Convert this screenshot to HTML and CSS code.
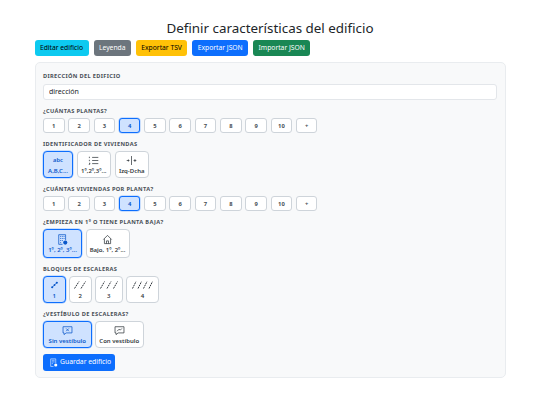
FILE: index.html
```html
<!DOCTYPE html>
<html lang="es">
<head>
<meta charset="utf-8">
<title>Definir características del edificio</title>
<link rel="stylesheet" href="styles.css">
</head>
<body>
<main class="page">
  <h1 class="title">Definir características del edificio</h1>
  <div class="toolbar">
    <button class="btn info">Editar edificio</button>
    <button class="btn grey">Leyenda</button>
    <button class="btn warn">Exportar TSV</button>
    <button class="btn blue">Exportar JSON</button>
    <button class="btn green">Importar JSON</button>
  </div>
  <section class="card">
    <div class="label first">DIRECCIÓN DEL EDIFICIO</div>
    <input class="field" type="text" value="dirección">

    <div class="label">¿CUÁNTAS PLANTAS?</div>
    <div class="row nums">
      <button class="num">1</button><button class="num">2</button><button class="num">3</button><button class="num on">4</button><button class="num">5</button><button class="num">6</button><button class="num">7</button><button class="num">8</button><button class="num">9</button><button class="num">10</button><button class="num">+</button>
    </div>

    <div class="label">IDENTIFICADOR DE VIVIENDAS</div>
    <div class="row">
      <button class="opt on w-a"><span class="abc">abc</span><span>A,B,C...</span></button>
      <button class="opt w-b">
        <svg class="ico" viewBox="0 0 16 16"><path d="M6 3.5h9M6 8h9M6 12.5h9M2 2.5v2M2 7v2M1.5 12h1.5l-1.5 1.5H3" /></svg>
        <span>1º,2º,3º...</span></button>
      <button class="opt w-b">
        <svg class="ico" viewBox="0 0 16 16"><path d="M8 1.5v13M1 8h4M3.5 6.5v3M11 8h4M13 6v4" /></svg>
        <span>Izq-Dcha</span></button>
    </div>

    <div class="label">¿CUÁNTAS VIVIENDAS POR PLANTA?</div>
    <div class="row nums">
      <button class="num">1</button><button class="num">2</button><button class="num">3</button><button class="num on">4</button><button class="num">5</button><button class="num">6</button><button class="num">7</button><button class="num">8</button><button class="num">9</button><button class="num">10</button><button class="num">+</button>
    </div>

    <div class="label">¿EMPIEZA EN 1º O TIENE PLANTA BAJA?</div>
    <div class="row">
      <button class="opt tall on w-c">
        <svg class="ico" viewBox="0 0 16 16"><path d="M2.5 15V1h10v8M2.5 15h5.5M4.5 3.5h1.5M7 3.5h1.5M9.5 3.5h1.5M4.5 6.5h1.5M7 6.5h1.5M9.5 6.5h1.5M4.5 9.5h1.5M7 9.5h1.5M4.5 12.5h1.5" /><circle class="dot" cx="12" cy="12.5" r="3" /></svg>
        <span>1º, 2º, 3º...</span></button>
      <button class="opt tall w-d">
        <svg class="ico" viewBox="0 0 16 16"><path d="M2 8l6-6 6 6M3.5 7v7h9V7M6.5 14v-4h3v4" /></svg>
        <span>Bajo, 1º, 2º...</span></button>
    </div>

    <div class="label">BLOQUES DE ESCALERAS</div>
    <div class="row">
      <button class="opt on w-s1">
        <svg class="stairs s1" viewBox="0 0 14 14"><path d="M2 12L12 2" /><circle class="dot" cx="3" cy="11" r="1.8"/><circle class="dot" cx="7" cy="7" r="1.6"/><circle class="dot" cx="11" cy="3" r="1.8"/></svg>
        <span>1</span></button>
      <button class="opt w-s2">
        <svg class="stairs s2" viewBox="0 0 12 8"><path d="M0.5 7.5L5 0.5M7 7.5L11.5 0.5" /></svg>
        <span>2</span></button>
      <button class="opt w-s3">
        <svg class="stairs s3" viewBox="0 0 18 8"><path d="M0.5 7.5L4.5 0.5M7 7.5L11 0.5M13.5 7.5L17.5 0.5" /></svg>
        <span>3</span></button>
      <button class="opt w-s4">
        <svg class="stairs s4" viewBox="0 0 21 8"><path d="M0.5 7.5L4 0.5M6 7.5L9.5 0.5M11.5 7.5L15 0.5M17 7.5L20.5 0.5" /></svg>
        <span>4</span></button>
    </div>

    <div class="label">¿VESTÍBULO DE ESCALERAS?</div>
    <div class="row">
      <button class="opt on w-v1">
        <svg class="ico" viewBox="0 0 16 16"><path d="M1.5 2.5h13v9H6l-3 2.5v-2.5H1.5zM6 5l4 4M10 5L6 9" /></svg>
        <span>Sin vestíbulo</span></button>
      <button class="opt w-v2">
        <svg class="ico" viewBox="0 0 16 16"><path d="M1.5 2.5h13v9H6l-3 2.5v-2.5H1.5zM4.5 9l3-3 1.5 1.5L11.5 5" /></svg>
        <span>Con vestíbulo</span></button>
    </div>

    <button class="btn blue save">
      <svg class="save-ico" viewBox="0 0 16 16"><path d="M3 15V1.5h9V9M3 15h5M5 4h5M5 7h5M5 10h2" /><circle class="fill" cx="12" cy="12.5" r="2.8" /></svg>
      Guardar edificio
    </button>
  </section>
</main>
</body>
</html>
```

FILE: styles.css
```css
* { box-sizing: border-box; }
html, body { margin: 0; padding: 0; background: #fff; }
body { font-family: "Noto Sans", "Open Sans", sans-serif; color: #212529; }
.page { width: 540px; padding: 17.5px 34.5px 0; }
.title { margin: 0; font-size: 13.4px; line-height: 20px; font-weight: 400; text-align: center; }
.toolbar { display: flex; gap: 5px; margin-top: 2.5px; }
button { font-family: inherit; margin: 0; cursor: pointer; }
.btn { height: 16px; padding: 0 4.4px; border: 1px solid transparent; border-radius: 3px; font-size: 6.75px; line-height: 14px; white-space: nowrap; }
.info { background: #0dcaf0; color: #000; }
.grey { background: #6c757d; color: #fff; }
.warn { background: #ffc107; color: #000; }
.blue { background: #0d6efd; color: #fff; }
.green { background: #198754; color: #fff; }
.card { margin-top: 6px; height: 316px; padding: 7.5px 7.5px 0; background: #f8f9fa; border: 1px solid #e9ecef; border-radius: 5px; }
.label { margin-top: 6px; height: 10px; font-size: 5.65px; line-height: 10px; font-weight: 700; letter-spacing: 0.35px; color: #495057; white-space: nowrap; }
.label.first { margin-top: 0; }
.field { display: block; width: 454px; height: 16px; margin-top: 3px; margin-bottom: 6.5px; padding: 0 5px; border: 1px solid #e3e6ea; border-radius: 3px; background: #fff; font: 7px "Noto Sans", sans-serif; color: #212529; outline: none; }
.row { display: flex; gap: 3.5px; margin-top: 2px; }
.nums { gap: 3.8px; }
.num { width: 21.5px; height: 15px; padding: 0; background: #fff; border: 1px solid #ced4da; border-radius: 3px; font-size: 5.8px; font-weight: 700; color: #495057; }
.on { background: #cfe2ff; border: 1px solid #0d6efd; color: #0d6efd; box-shadow: 0 0 0 0.5px #9ec5fe; }
.num.on { color: #0a58ca; }
.opt { display: flex; flex-direction: column; align-items: center; justify-content: center; gap: 1px; height: 27px; padding: 0; background: #fff; border: 1px solid #ced4da; border-radius: 4px; font-size: 6px; line-height: 8px; font-weight: 600; color: #343a40; white-space: nowrap; }
.opt.on { background: #cfe2ff; border-color: #0d6efd; color: #0a58ca; }
.tall { height: 29px; }
.w-a { width: 30px; }
.w-b { width: 34.5px; }
.w-c { width: 39px; }
.w-d { width: 44px; }
.w-s1 { width: 22.5px; }
.w-s2 { width: 22.5px; }
.w-s3 { width: 27.5px; }
.w-s4 { width: 33px; }
.w-v1 { width: 48.5px; }
.w-v2 { width: 48.5px; }
.ico { width: 11px; height: 11px; fill: none; stroke: currentColor; stroke-width: 1.1; }
.ico .dot, .stairs .dot { fill: currentColor; stroke: none; }
.abc { height: 11px; line-height: 11px; font-size: 5.8px; }
.stairs { height: 8px; margin: 1px 0 2px; fill: none; stroke: currentColor; stroke-width: 1; stroke-dasharray: 1.8 0.7; }
.s1 { width: 9px; stroke-dasharray: none; stroke-width: 1.4; }
.s2 { width: 12px; }
.s3 { width: 18px; }
.s4 { width: 21px; }
.save { display: flex; align-items: center; gap: 2px; margin-top: 5.5px; width: 72px; height: 17px; padding: 0 5px; font-size: 6.8px; }
.save-ico { width: 9px; height: 9px; fill: none; stroke: #fff; stroke-width: 1; flex: none; }
.save-ico .fill { fill: #fff; stroke: none; }
```
